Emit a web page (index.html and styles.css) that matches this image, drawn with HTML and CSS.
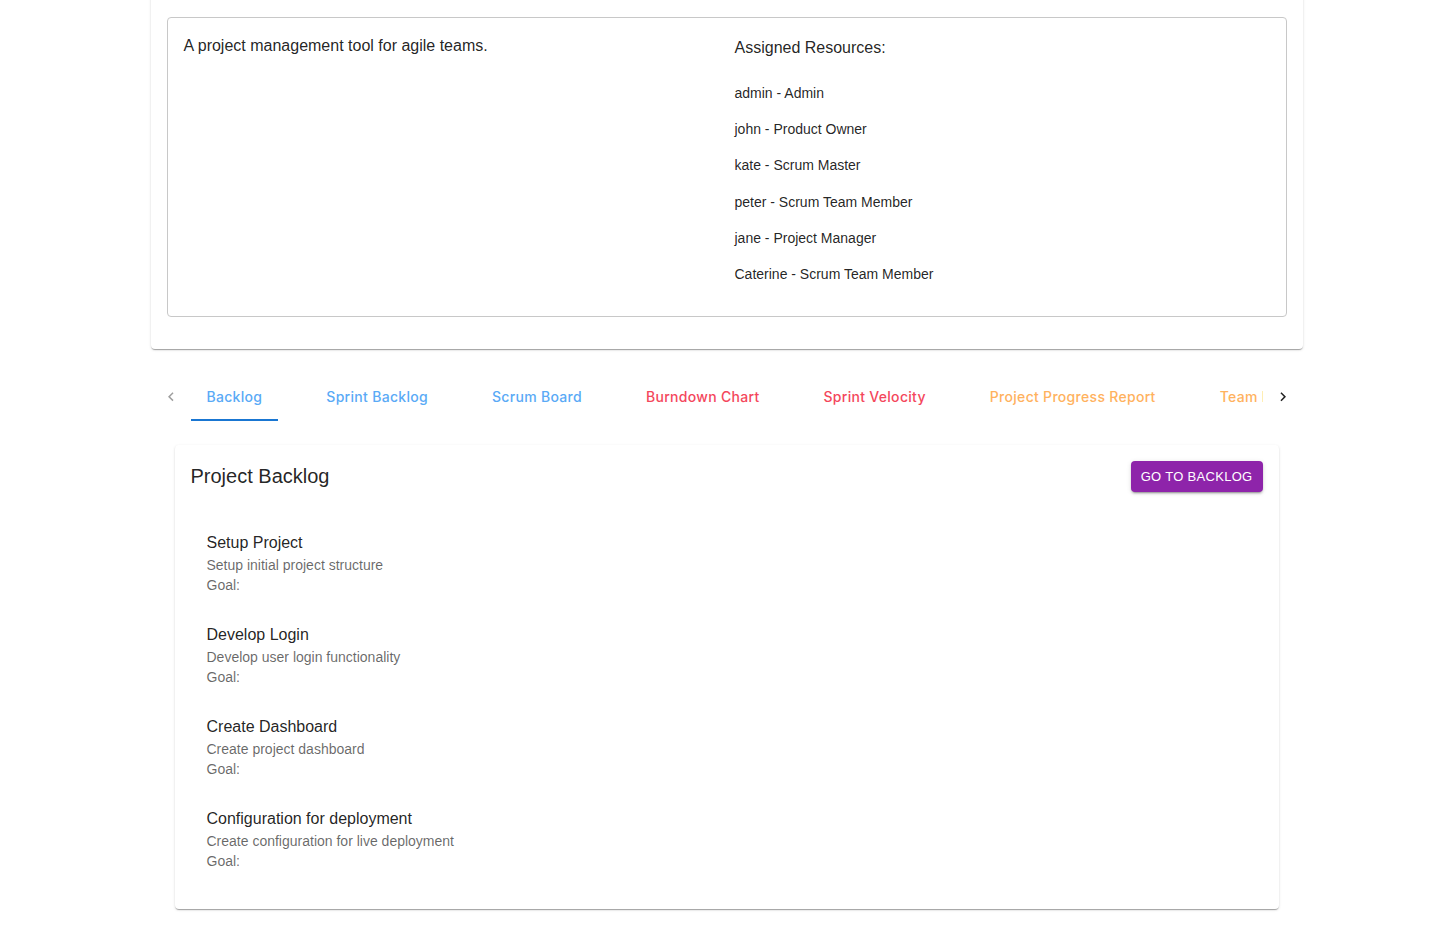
FILE: index.html
```html
<!DOCTYPE html>
<html>
<head>
<meta charset="utf-8">
<link rel="stylesheet" href="styles.css">
</head>
<body>
<div class="container">
  <div class="info-card">
    <div class="info-box">
      <div class="desc">A project management tool for agile teams.</div>
      <div class="resources">
        <div class="res-title">Assigned Resources:</div>
        <ul class="res-list">
          <li>admin - Admin</li>
          <li>john - Product Owner</li>
          <li>kate - Scrum Master</li>
          <li>peter - Scrum Team Member</li>
          <li>jane - Project Manager</li>
          <li>Caterine - Scrum Team Member</li>
        </ul>
      </div>
    </div>
  </div>

  <div class="tabs">
    <div class="scroll-btn disabled">
      <svg viewBox="0 0 24 24" width="18" height="18"><path d="M15.41 16.09l-4.58-4.59 4.58-4.59L14 5.5l-6 6 6 6z" fill="currentColor"/></svg>
    </div>
    <div class="tab-viewport">
      <div class="tab-list">
        <div class="tab blue active">Backlog</div>
        <div class="tab blue">Sprint Backlog</div>
        <div class="tab blue">Scrum Board</div>
        <div class="tab red">Burndown Chart</div>
        <div class="tab red">Sprint Velocity</div>
        <div class="tab orange">Project Progress Report</div>
        <div class="tab orange">Team Members</div>
      </div>
    </div>
    <div class="scroll-btn">
      <svg viewBox="0 0 24 24" width="18" height="18"><path d="M8.59 16.34l4.58-4.59-4.58-4.59L10 5.75l6 6-6 6z" fill="currentColor"/></svg>
    </div>
  </div>

  <div class="panel">
    <div class="backlog-card">
      <div class="card-header">
        <div class="card-title">Project Backlog</div>
        <button class="btn">GO TO BACKLOG</button>
      </div>
      <ul class="items">
        <li class="item">
          <div class="item-title">Setup Project</div>
          <div class="item-sub">Setup initial project structure</div>
          <div class="item-sub">Goal:</div>
        </li>
        <li class="item">
          <div class="item-title">Develop Login</div>
          <div class="item-sub">Develop user login functionality</div>
          <div class="item-sub">Goal:</div>
        </li>
        <li class="item">
          <div class="item-title">Create Dashboard</div>
          <div class="item-sub">Create project dashboard</div>
          <div class="item-sub">Goal:</div>
        </li>
        <li class="item">
          <div class="item-title">Configuration for deployment</div>
          <div class="item-sub">Create configuration for live deployment</div>
          <div class="item-sub">Goal:</div>
        </li>
      </ul>
    </div>
  </div>
</div>
</body>
</html>
```

FILE: styles.css
```css
* { box-sizing: border-box; }
html, body {
  margin: 0;
  padding: 0;
  background: #fff;
  font-family: "Liberation Sans", Arial, sans-serif;
  color: rgba(0,0,0,0.87);
}
.container {
  width: 1152px;
  margin: 0 auto;
}
.info-card {
  margin-top: -20px;
  padding: 37px 16px 32px;
  background: #fff;
  border-radius: 4px;
  box-shadow: 0 2px 1px -1px rgba(0,0,0,0.2), 0 1px 1px 0 rgba(0,0,0,0.14), 0 1px 3px 0 rgba(0,0,0,0.12);
}
.info-box {
  border: 1px solid #c8c8c8;
  border-radius: 4px;
  padding: 16px;
  display: grid;
  grid-template-columns: 551px 1fr;
}
.desc {
  font-size: 16px;
  line-height: 22px;
  padding-top: 1px;
}
.res-title {
  font-size: 16px;
  line-height: 28px;
  margin-bottom: 5px;
}
.res-list {
  list-style: none;
  margin: 0;
  padding: 8px 0;
}
.res-list li {
  font-size: 14px;
  line-height: 20.2px;
  padding: 8px 0;
}
.tabs {
  margin-top: 24px;
  height: 48px;
  display: flex;
  align-items: stretch;
}
.scroll-btn {
  width: 40px;
  flex: 0 0 40px;
  display: flex;
  align-items: center;
  justify-content: center;
  color: rgba(0,0,0,0.87);
  padding-bottom: 1px;
}
.scroll-btn.disabled { color: rgba(0,0,0,0.38); }
.tab-viewport {
  flex: 1;
  overflow: hidden;
}
.tab-list {
  display: flex;
  gap: 32px;
  height: 48px;
  white-space: nowrap;
}
.tab {
  padding: 0 16px;
  height: 48px;
  display: flex;
  align-items: center;
  font-family: Inter, "Liberation Sans", sans-serif;
  font-size: 14px;
  font-weight: 500;
  letter-spacing: 0.3px;
  border-bottom: 2px solid transparent;
}
.tab.active { border-bottom-color: #1976d2; }
.tab.blue { color: #5aaaf6; }
.tab.red { color: #f4475c; }
.tab.orange { color: #ffb25e; }
.panel {
  padding: 24px;
}
.backlog-card {
  background: #fff;
  border-radius: 4px;
  box-shadow: 0 2px 1px -1px rgba(0,0,0,0.2), 0 1px 1px 0 rgba(0,0,0,0.14), 0 1px 3px 0 rgba(0,0,0,0.12);
  padding: 16px 16px 17px;
}
.card-header {
  display: flex;
  justify-content: space-between;
  align-items: center;
  height: 31px;
}
.card-title {
  font-size: 20px;
  line-height: 28px;
  padding-bottom: 1px;
}
.btn {
  border: none;
  background: #8e24aa;
  color: #fff;
  font-family: "Liberation Sans", Arial, sans-serif;
  font-size: 13px;
  letter-spacing: 0.3px;
  height: 31px;
  padding: 0 10px;
  border-radius: 4px;
  box-shadow: 0 3px 1px -2px rgba(0,0,0,0.2), 0 2px 2px 0 rgba(0,0,0,0.14), 0 1px 5px 0 rgba(0,0,0,0.12);
}
.items {
  list-style: none;
  margin: 0;
  padding: 25px 0 7px;
}
.item {
  padding: 14px 16px;
}
.item-title {
  font-size: 16px;
  line-height: 24px;
}
.item-sub {
  font-size: 14px;
  line-height: 20px;
  color: rgba(0,0,0,0.6);
}
```
